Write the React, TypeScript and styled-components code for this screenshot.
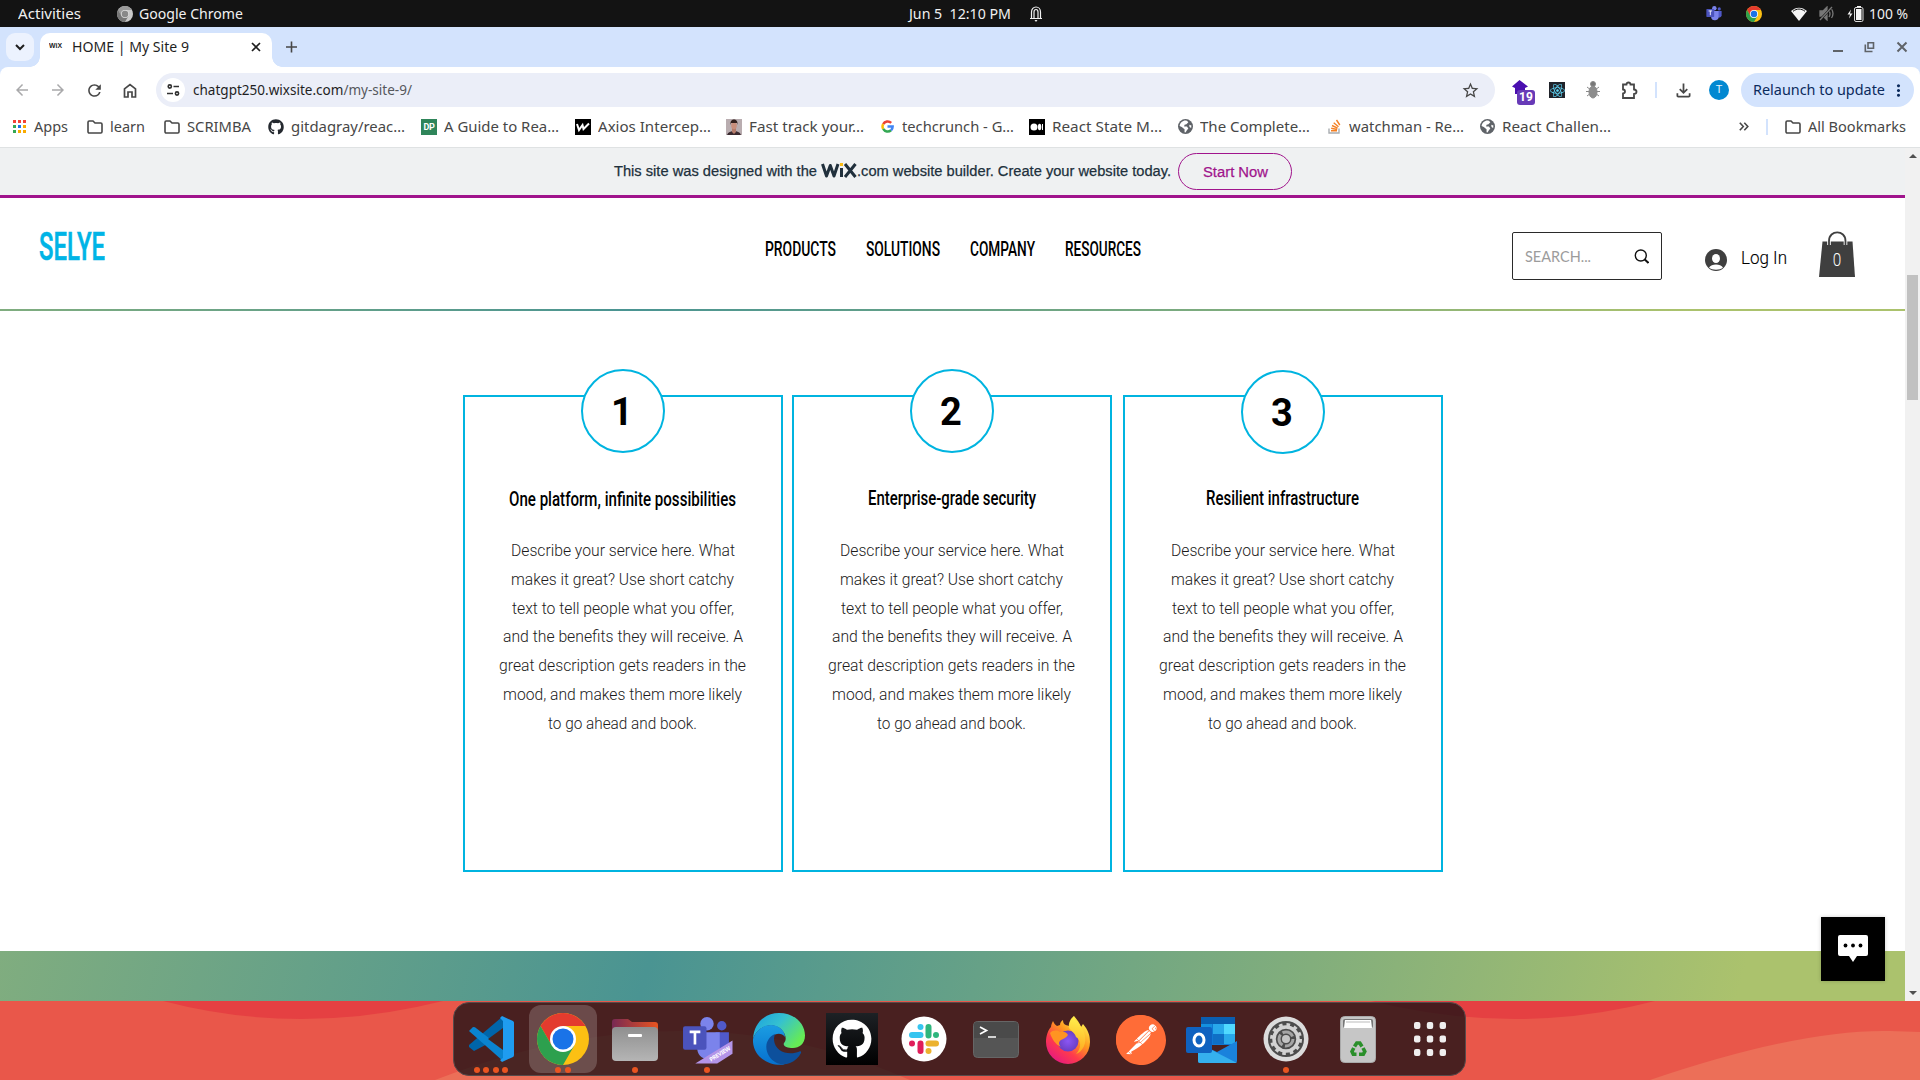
import React, { useLayoutEffect, useRef, useState } from "react";
import styled, { createGlobalStyle, css } from "styled-components";
import {
  MdArrowBack,
  MdArrowForward,
  MdRefresh,
  MdStarBorder,
  MdMoreVert,
  MdOutlineFileDownload,
} from "react-icons/md";
import { FaGithub, FaReact } from "react-icons/fa";
import { SiPostman } from "react-icons/si";

const UI = `"Noto Sans", "Open Sans", sans-serif`;
const DIN = `Roboto, "Liberation Sans", sans-serif`;

const GlobalStyle = createGlobalStyle`
  * { box-sizing: border-box; }
  html, body { margin: 0; padding: 0; overflow: hidden; }
  body { width: 1920px; height: 1080px; font-family: ${UI}; }
  svg { display: block; flex: none; }
`;

/* ---------- text condensed or widened to a given width ---------- */

const FitBox = styled.span<{ $w: number }>`
  display: block;
  flex: none;
  width: ${(p) => p.$w}px;
  white-space: pre;
`;
const FitInner = styled.span`
  display: inline-block;
  transform-origin: 0 50%;
`;

function Fit({ w, children }: { w: number; children: React.ReactNode }) {
  const ref = useRef<HTMLSpanElement>(null);
  const [scale, setScale] = useState(1);
  useLayoutEffect(() => {
    const el = ref.current;
    if (el && el.offsetWidth) setScale(w / parseFloat(getComputedStyle(el).width));
  }, [w]);
  return (
    <FitBox $w={w}>
      <FitInner ref={ref} style={{ transform: `scaleX(${scale})` }}>
        {children}
      </FitInner>
    </FitBox>
  );
}

/* ---------- layout ---------- */

const Screen = styled.div`
  width: 1920px;
  height: 1080px;
  display: flex;
  flex-direction: column;
  overflow: hidden;
  background: #fff;
`;

const Spacer = styled.div<{ $w?: number }>`
  ${(p) => (p.$w ? css`flex: none; width: ${p.$w}px;` : css`flex: 1;`)}
`;

const TopBar = styled.div`
  display: flex;
  align-items: center;
  flex: none;
  height: 27px;
  background: #131313;
  color: #f0f0f0;
  font-size: 14.5px;
  line-height: 24px;
  & > span {
    padding-bottom: 2px;
  }
`;

const TabStrip = styled.div`
  display: flex;
  align-items: flex-end;
  flex: none;
  height: 40px;
  background: #d3e3fd;
`;

const TabSearch = styled.div`
  display: grid;
  place-items: center;
  width: 28px;
  height: 28px;
  margin: 0 6px 6px;
  border-radius: 9px;
  background: #ecf2fe;
`;

const Tab = styled.div`
  position: relative;
  display: flex;
  align-items: center;
  width: 232px;
  height: 34px;
  padding: 0 10px 6px 9px;
  border-radius: 10px 10px 0 0;
  background: #fff;
  color: #1f1f1f;
  font-size: 14.5px;
  line-height: 24px;
  & > span {
    padding-bottom: 2px;
  }
  &::before,
  &::after {
    content: "";
    position: absolute;
    bottom: 0;
    width: 10px;
    height: 10px;
  }
  &::before {
    left: -10px;
    background: radial-gradient(circle at 0 0, transparent 9.5px, #fff 10px);
  }
  &::after {
    right: -10px;
    background: radial-gradient(circle at 100% 0, transparent 9.5px, #fff 10px);
  }
`;

const Favicon = styled.span`
  font: 700 7px/10px "Liberation Sans", sans-serif;
  color: #222;
`;

const WindowButtons = styled.div`
  display: flex;
  align-items: center;
  height: 40px;
  padding-right: 12px;
  gap: 20px;
`;

const ToolbarWrap = styled.div`
  flex: none;
  background: #d3e3fd;
`;
const Toolbar = styled.div`
  display: flex;
  align-items: center;
  height: 46px;
  padding: 0 6px 0 12px;
  border-radius: 8px 8px 0 0;
  background: #fff;
  color: #474747;
`;

const NavButton = styled.div<{ $off?: boolean }>`
  display: grid;
  place-items: center;
  width: 20px;
  margin-right: 16px;
  color: ${(p) => (p.$off ? "#a9a9ab" : "#474747")};
`;

const Omnibox = styled.div`
  display: flex;
  align-items: center;
  width: 1339px;
  height: 34px;
  padding: 0 15px 0 5px;
  border-radius: 17px;
  background: #ebeef8;
  color: #1f1f1f;
  font-size: 14.5px;
  line-height: 24px;
  & > span {
    padding-bottom: 2px;
  }
`;
const SiteInfo = styled.div`
  display: grid;
  place-items: center;
  width: 24px;
  height: 24px;
  margin-right: 8px;
  border-radius: 50%;
  background: #fff;
`;
const Path = styled.span`
  color: #55575c;
`;

const Extensions = styled.div`
  display: flex;
  align-items: center;
  height: 34px;
  margin-left: 17px;
`;
const PurpleExt = styled.div`
  position: relative;
  width: 22px;
  height: 28px;
  margin-right: 15px;
  padding-top: 4px;
`;
const ExtBadge = styled.span`
  position: absolute;
  left: 5px;
  top: 14px;
  width: 18px;
  height: 15px;
  border-radius: 3px;
  background: #673ab7;
  color: #fff;
  text-align: center;
  font: 700 12px/15px Roboto, sans-serif;
`;
const ReactExt = styled.div`
  display: grid;
  place-items: center;
  width: 16px;
  height: 16px;
  margin-right: 20px;
  background: #20232a;
  color: #61dafb;
`;
const Divider = styled.div<{ $h: number }>`
  width: 2px;
  height: ${(p) => p.$h}px;
  background: #d3e3fd;
`;
const Avatar = styled.div`
  display: grid;
  place-items: center;
  width: 20px;
  height: 20px;
  border-radius: 50%;
  background: #0288d1;
  color: #e8f4fb;
  font: 11px/20px Roboto, sans-serif;
`;
const Relaunch = styled.div`
  display: flex;
  align-items: center;
  width: 173px;
  height: 34px;
  margin-left: 12px;
  padding-left: 12px;
  border-radius: 17px;
  background: #d3e3fd;
  color: #0b2a5c;
  font-size: 14.5px;
  line-height: 24px;
  & > span {
    padding-bottom: 2px;
  }
`;

const BookmarksBar = styled.div`
  display: flex;
  align-items: center;
  flex: none;
  height: 35px;
  padding: 0 14px 7px 11px;
  border-bottom: 1px solid #dfe2e3;
  background: #fff;
  color: #474747;
  font-size: 14.5px;
  line-height: 24px;
`;
const Bookmark = styled.div<{ $w: number }>`
  display: flex;
  align-items: center;
  gap: 7px;
  width: ${(p) => p.$w}px;
`;
const BookmarkLabel = styled.div`
  padding-bottom: 2px;
`;
const IconSlot = styled.span<{ $bg?: string }>`
  display: grid;
  place-items: center;
  flex: none;
  width: 16px;
  height: 16px;
  background: ${(p) => p.$bg || "transparent"};
  overflow: hidden;
`;
const DpMark = styled.span`
  color: #fff;
  font: 700 9px/16px Roboto, sans-serif;
  letter-spacing: -0.3px;
`;

/* ---------- web page ---------- */

const Viewport = styled.div`
  display: flex;
  flex: none;
  height: 853px;
`;
const Page = styled.div`
  position: relative;
  display: flex;
  flex-direction: column;
  width: 1905px;
`;
const Scrollbar = styled.div`
  display: flex;
  flex-direction: column;
  align-items: center;
  width: 15px;
  padding: 6px 0 6px;
  background: #f1f1f1;
`;
const Thumb = styled.div`
  width: 11px;
  height: 125px;
  margin-top: 117px;
  background: #c1c1c1;
`;

const Banner = styled.div`
  display: flex;
  align-items: center;
  flex: none;
  height: 50px;
  padding-left: 614px;
  border-bottom: 3px solid #a0148c;
  background: #eff1f2;
  color: #20303c;
  font: 15.5px/18px "Liberation Sans", Arial, sans-serif;
  -webkit-text-stroke: 0.25px #20303c;
  & > span {
    padding-bottom: 2px;
  }
`;
const StartNow = styled.div`
  display: flex;
  justify-content: center;
  width: 114px;
  height: 37px;
  margin-left: 7px;
  border: 1px solid #a0148c;
  border-radius: 18.5px;
  color: #a0148c;
  font-size: 15.5px;
  line-height: 35px;
  -webkit-text-stroke: 0.25px #a0148c;
`;

const Header = styled.div`
  display: flex;
  flex: none;
  height: 111px;
  padding-left: 39px;
`;
const Logo = styled.div`
  width: 726px;
  padding-top: 26px;
  color: #00b4e6;
  font: 500 39px/46px ${DIN};
  -webkit-text-stroke: 0.6px #00b4e6;
`;
const NavLinks = styled.div`
  display: flex;
  gap: 30px;
  width: 747px;
  padding-top: 38px;
  color: #000;
  font: 500 21px/26px ${DIN};
`;
const SearchBox = styled.div`
  display: flex;
  align-items: center;
  justify-content: space-between;
  width: 150px;
  height: 48px;
  margin-top: 34px;
  padding: 0 12px;
  border: 1px solid #2a2a2a;
  border-radius: 2px;
  color: #9c9c9c;
  font: 400 15.5px/23px Lato, ${DIN};
`;
const Login = styled.div`
  display: flex;
  align-items: center;
  gap: 14px;
  height: 27px;
  margin: 46px 0 0 43px;
  color: #000;
  font: 300 18px/27px ${DIN};
  -webkit-text-stroke: 0.15px #000;
`;
const LoginIcon = styled.div`
  padding-top: 4px;
`;
const Cart = styled.div`
  margin: 33px 0 0 32px;
`;

const GRADIENT = "#80ad7f 0, #4a9492 630px, #82ae7c 1270px, #abc26d 1690px";
const HeaderLine = styled.div`
  flex: none;
  height: 2px;
  background: linear-gradient(90deg, ${GRADIENT});
`;
const Services = styled.div`
  display: flex;
  flex: none;
  height: 640px;
  padding: 84px 0 0 463px;
`;
const Card = styled.div<{ $gap: number }>`
  display: flex;
  flex-direction: column;
  align-items: center;
  width: 320px;
  height: 477px;
  margin-right: ${(p) => p.$gap}px;
  border: 2px solid #00b4e0;
`;
const Circle = styled.div<{ $dy: number }>`
  display: flex;
  justify-content: center;
  flex: none;
  width: 84px;
  height: 84px;
  margin-top: ${(p) => -28 + p.$dy}px;
  margin-bottom: ${(p) => -p.$dy}px;
  padding-right: 2px;
  border: 2px solid #00b4e0;
  border-radius: 50%;
  background: #fff;
  color: #000;
  font: 700 38px/82px ${DIN};
`;
const CardTitle = styled.div<{ $dy: number }>`
  margin: ${(p) => 32 + p.$dy}px 1px 0 0;
  padding-bottom: ${(p) => 26 - p.$dy}px;
  color: #000;
  font: 500 21px/26px ${DIN};
`;
const CardLine = styled.div`
  display: flex;
  justify-content: center;
  height: 28.8px;
  margin-right: 1px;
  color: #1c1b1b;
  font: 300 15.8px/28.8px ${DIN};
`;
const Band = styled.div`
  flex: none;
  height: 50px;
  background: linear-gradient(105deg, ${GRADIENT});
`;
const ChatButton = styled.div`
  position: absolute;
  left: 1821px;
  top: 769px;
  display: grid;
  place-items: center;
  width: 64px;
  height: 64px;
  background: #000;
  box-shadow: 0 0 4px rgba(0, 0, 0, 0.2);
`;

/* ---------- desktop ---------- */

const Desktop = styled.div`
  position: relative;
  flex: 1;
  padding: 1px 0 0 453px;
  background: #e9574a;
`;
const Wallpaper = styled.svg`
  position: absolute;
  inset: 0;
`;
const Dock = styled.div`
  position: relative;
  display: flex;
  align-items: center;
  width: 1013px;
  height: 74px;
  padding-left: 1px;
  border: 1px solid #574b4b;
  border-radius: 16px;
  background: rgba(28, 17, 20, 0.78);
`;
const DockItem = styled.div<{ $active?: boolean }>`
  position: relative;
  display: grid;
  place-items: center;
  flex: none;
  width: 68px;
  height: 68px;
  margin: 0 2.05px;
  border-radius: 12px;
  background: ${(p) => (p.$active ? "rgba(255,255,255,.19)" : "transparent")};
`;
const Dots = styled.div`
  position: absolute;
  left: 0;
  right: 0;
  bottom: 0;
  display: flex;
  justify-content: center;
  gap: 3.3px;
`;
const Dot = styled.i`
  width: 6px;
  height: 6px;
  border-radius: 50%;
  background: #e95420;
`;
const DockLine = styled.div`
  width: 1px;
  height: 54px;
  margin: 0 1px;
  background: #75605d;
`;

/* ---------- icons ---------- */

const ChromeLogo = ({ s, gray }: { s: number; gray?: boolean }) => {
  const c = gray ? ["#9a9a9a", "#c9c9c9", "#777", "#888", "#ddd"] : ["#e33b2e", "#fcc013", "#2da04e", "#1a73e8", "#fff"];
  return (
    <svg width={s} height={s} viewBox="0 0 52 52">
      <circle cx="26" cy="26" r="26" fill={c[1]} />
      <path d="M26 26 14.8 32.5 3.5 13A26 26 0 0 1 48.5 13H26z" fill={c[0]} />
      <path d="M3.5 13A26 26 0 0 0 26 52L37.3 32.5 26 26 14.8 32.5z" fill={c[2]} />
      <circle cx="26" cy="26" r="13" fill={c[4]} />
      <circle cx="26" cy="26" r="10.5" fill={c[3]} />
    </svg>
  );
};

const Folder = () => (
  <svg width="16" height="14" viewBox="0 0 16 14" fill="none" stroke="#474747" strokeWidth="1.6">
    <path d="M1 2.2c0-.8.5-1.2 1.2-1.2H6l2 2h5.8c.7 0 1.2.5 1.2 1.2v7.6c0 .7-.5 1.2-1.2 1.2H2.2C1.5 13 1 12.500 1 11.800z" />
  </svg>
);
const Globe = () => (
  <svg width="15" height="15" viewBox="0 0 16 16">
    <circle cx="8" cy="8" r="8" fill="#5f6368" />
    <path d="M9.500 1.800 11 3.500 9 5.500 7 6 6.500 8h3l1.500 2-1.500 2-1.500 2.300L7 14v-3L4 8.500 1.700 7.500C2 4 5 1.500 8 1.500zM12 6l2.300 1-.3 2.500-1.700-1z" fill="#fff" />
  </svg>
);
const AppsGrid = () => (
  <svg width="13" height="13" viewBox="0 0 13 13">
    {["#f44336", "#f44336", "#f44336", "#34a853", "#1a73e8", "#f9ab00", "#34a853", "#f9ab00", "#f9ab00"].map((f, i) => (
      <rect key={i} x={(i % 3) * 5} y={Math.floor(i / 3) * 5} width="3" height="3" fill={f} />
    ))}
  </svg>
);
const GoogleG = () => (
  <svg width="13" height="13" viewBox="0 0 24 24" fill="none" strokeWidth="4.600">
    <path d="M4 7.500A9.600 9.600 0 0 1 18.800 5.200" stroke="#ea4335" />
    <path d="M4 7.500a9.600 9.600 0 0 0 0 9" stroke="#fbbc05" />
    <path d="M4 16.500a9.600 9.600 0 0 0 14.500 2.500" stroke="#34a853" />
    <path d="M18.500 19a9.600 9.600 0 0 0 3-7H12" stroke="#4285f4" />
  </svg>
);
const AxiosMark = () => (
  <svg width="16" height="16" viewBox="0 0 16 16">
    <path d="M2 5l2 6 3.500-5 1 4L14 4.500" fill="none" stroke="#fff" strokeWidth="2" />
  </svg>
);
const Portrait = () => (
  <svg width="16" height="16" viewBox="0 0 16 16">
    <rect width="16" height="16" fill="#b9adb0" />
    <path d="M1 16c1-3 4-4 7-4s6 1 7 4z" fill="#3a2a30" />
    <path d="M6 9h4v4l-2 2-2-2z" fill="#b67c6a" />
    <ellipse cx="8" cy="6.500" rx="2.800" ry="3.800" fill="#c98f7c" />
    <path d="M4.500 6C4 2 6 .500 8 .500s4 1.500 3.500 5.500L11 4H5z" fill="#33211e" />
  </svg>
);
const MediumMark = () => (
  <svg width="16" height="16" viewBox="0 0 16 16" fill="#fff">
    <circle cx="5" cy="8" r="3.500" />
    <ellipse cx="10.600" cy="8" rx="1.700" ry="3.300" />
    <rect x="13" y="5" width="1" height="6" />
  </svg>
);
const StackMark = () => (
  <svg width="13" height="15" viewBox="0 0 13 15" fill="none">
    <path d="M1 9.500V14h10V9.500" stroke="#a8acb0" strokeWidth="1.400" />
    <path d="M3 11.800h6M3.200 9.300l6 1.200M4 6.500l5.600 2.700M5.700 3.700l4.800 4M8.500 1l3.300 5" stroke="#f48024" strokeWidth="1.400" />
  </svg>
);
const Teams = ({ s, preview }: { s: number; preview?: boolean }) => (
  <svg width={s} height={s} viewBox="0 0 50 50">
    <circle cx="39" cy="11.500" r="4.600" fill="#5059c9" />
    <path d="M33 18h13v13a8 8 0 0 1-13 4z" fill="#5059c9" />
    <circle cx="24.500" cy="9.500" r="6.600" fill="#7b83eb" />
    <path d="M15 18h22v14a11 11 0 0 1-22 3z" fill="#7b83eb" />
    <rect x="1" y="12" width="23" height="23" rx="2" fill="#4b53bc" />
    <path d="M7.500 17.500h10.500M12.700 17v13" stroke="#fff" strokeWidth="2.600" />
    {preview && (
      <>
        <path d="M13 48.500 49.500 26v13L34.500 48.500z" fill="#b394e8" />
        <text x="28.500" y="46.800" fontSize="5.600" fontWeight="700" fontFamily="Noto Sans, sans-serif" fill="#fff" textLength="23" transform="rotate(-32 28.500 46.800)">
          PREVIEW
        </text>
      </>
    )}
  </svg>
);

const VsCode = () => (
  <svg width="46" height="46" viewBox="0 0 46 46">
    <path d="M34 1 46 6v8L6 35 1 31v-2z" fill="#0065a9" />
    <path d="M1 15l4-4 2 .3L35 33v12z" fill="#0a84d0" />
    <path d="M34 0 45 5q1 1 1 2v32q0 1.500-1 2l-11 5-2-2 3-2V5l-3-3z" fill="#1f9cf0" />
    <path d="M35 12v22L20 23z" fill="#46231f" />
  </svg>
);
const Files = () => (
  <svg width="46" height="43" viewBox="0 0 46 43">
    <defs>
      <linearGradient id="ft"><stop stopColor="#772953" /><stop offset="1" stopColor="#e95420" /></linearGradient>
      <linearGradient id="fb" x2="0" y2="1"><stop stopColor="#8f8f8f" /><stop offset="1" stopColor="#b5b5b5" /></linearGradient>
    </defs>
    <path d="M0 4q0-3 3-3h13l4 3h23q3 0 3 3v14H0z" fill="url(#ft)" />
    <rect x="0" y="9" width="46" height="34" rx="4" fill="url(#fb)" />
    <rect x="16" y="16" width="14" height="3" rx="1" fill="#fff" />
  </svg>
);
const Edge = () => (
  <svg width="52" height="52" viewBox="0 0 52 52">
    <defs>
      <linearGradient id="ew" x1="0" x2="1" y2=".6"><stop stopColor="#1a9fe0" /><stop offset=".5" stopColor="#35c1d0" /><stop offset="1" stopColor="#66eb55" /></linearGradient>
      <linearGradient id="eb" x2="0" y2="1"><stop stopColor="#1b9de2" /><stop offset="1" stopColor="#0670ce" /></linearGradient>
    </defs>
    <path d="M0 26C1 10 12 0 26 0c15 0 26 10 26 22.500C52 31 46 35 40 35c-6 0-10.500-2-9-5 3-3 2-9-3-14C18 8 4 14 0 26z" fill="url(#ew)" />
    <path d="M0 26C3 17 10 12 18 12c8 0 14 6 14 12-6-8-18 0-16 10s8 16 16 17.500C14 54-1 42 0 26z" fill="url(#eb)" />
    <path d="M22 21c-9 4-11 14-6 22s14 10 21 7c5-2 9-6 11-10 .5-1.500-.5-2-1.500-1.500C36 43 22 39 21 27c0-3 .5-4 1-6z" fill="#0d509c" />
  </svg>
);
const SlackLogo = () => (
  <svg width="46" height="46" viewBox="0 0 46 46">
    <circle cx="23" cy="23" r="22.500" fill="#fff" />
    <g strokeWidth="6" strokeLinecap="round">
      <path d="M11 19h8.500" stroke="#36c5f0" /><path d="M19.500 11v0" stroke="#36c5f0" />
      <path d="M27.500 11v8.500" stroke="#2eb67d" /><path d="M35 19v0" stroke="#2eb67d" />
      <path d="M27.500 27.500H35" stroke="#ecb22e" /><path d="M27.500 35v0" stroke="#ecb22e" />
      <path d="M19.500 27.500V35" stroke="#e01e5a" /><path d="M11 27.500v0" stroke="#e01e5a" />
    </g>
  </svg>
);
const Terminal = () => (
  <svg width="46" height="37" viewBox="0 0 46 37">
    <rect x=".5" y=".5" width="45" height="36" rx="4" fill="#555" stroke="#666" />
    <path d="M1 17V4q0-3 3-3h38q3 0 3 3v13z" fill="#4a4a4a" />
    <path d="M7 6l6.500 3.500L7 13M15 16h8" fill="none" stroke="#fff" strokeWidth="1.700" />
  </svg>
);
const Firefox = () => (
  <svg width="46" height="49" viewBox="0 0 46 49">
    <defs>
      <linearGradient id="ff" x1=".85" y1=".1" x2=".2" y2="1"><stop stopColor="#fff44f" /><stop offset=".35" stopColor="#ff9a1f" /><stop offset=".65" stopColor="#ff3b4b" /><stop offset="1" stopColor="#e31587" /></linearGradient>
      <linearGradient id="fy" x1=".6" y1="0" x2=".5" y2="1"><stop stopColor="#fff44f" /><stop offset="1" stopColor="#ffa41c" /></linearGradient>
      <radialGradient id="fp"><stop stopColor="#8b56f5" /><stop offset="1" stopColor="#6b3fc4" /></radialGradient>
    </defs>
    <path d="M6 12c0-2 1-4 2-6 1 2 2 4 4 5l3-1c0-2 1-4 3-5 0 4 2 5 6 6L29 1c3 4 6 7 7 11l2-3c5 6 7 11 7 18A22 22 0 0 1 1 27C1 21 3 15 6 12z" fill="url(#ff)" />
    <circle cx="23" cy="26" r="10.500" fill="url(#fp)" />
    <path d="M5 18c3-3 7-3 10-1 3-1 7 0 8 3-2 3-5 4-7 5-3 2-2 5 0 7-6-3-9-8-11-14z" fill="#ff9422" />
    <path d="M24 13c-1-5 2-10 5-12 0 5 8 9 10 16 4 12-2 20-8 22 6-6 5-14 0-17-1-4-4-5-7-9z" fill="url(#fy)" />
  </svg>
);
const Outlook = () => (
  <svg width="51" height="47" viewBox="0 0 51 47">
    <rect x="15" y="1" width="34" height="28" rx="2" fill="#0f78d4" />
    <path d="M15 8h11v10H15z" fill="#1490df" /><path d="M27 8h11v10H27z" fill="#28a8ea" /><path d="M38 8h11v10H38z" fill="#50d9ff" />
    <path d="M15 1h34v7H15z" fill="#0a5eb0" /><path d="M27 18h11v10H27z" fill="#0f6fc6" /><path d="M38 18h11v10H38z" fill="#28a8ea" />
    <path d="M51 25v20q0 2-2 2H14q-2 0-2-2V27l19 9z" fill="#1a82dc" />
    <path d="M12 27l39 20H14q-2 0-2-2z" fill="#35b0ee" />
    <rect x="0" y="11" width="26" height="26" rx="2" fill="#0f62c0" />
    <ellipse cx="13" cy="24" rx="5" ry="6" fill="none" stroke="#fff" strokeWidth="3" />
  </svg>
);
const Settings = () => (
  <svg width="46" height="46" viewBox="0 0 46 46">
    <circle cx="23" cy="23" r="22.500" fill="#dcdcdc" />
    <circle cx="23" cy="23" r="18" fill="#4c4c4c" />
    <circle cx="23" cy="23" r="14.500" fill="none" stroke="#d2d2d2" strokeWidth="3" strokeDasharray="3.600 4" />
    <circle cx="23" cy="23" r="12" fill="none" stroke="#d2d2d2" strokeWidth="3.500" />
    <circle cx="23" cy="23" r="7" fill="none" stroke="#a5a5a5" strokeWidth="3" strokeDasharray="12 2.600" />
    <circle cx="23" cy="23" r="4" fill="#c4c4c4" />
  </svg>
);
const Trash = () => (
  <svg width="36" height="47" viewBox="0 0 36 47">
    <rect x=".5" y=".5" width="35" height="46" rx="4" fill="#c6c6c6" stroke="#aaa" />
    <rect x="3" y="3" width="30" height="9" rx="2" fill="#777" />
    <path d="M5 4h26l1 8H4z" fill="#fff" /><path d="M6 6h24" stroke="#bbb" />
    <g fill="none" stroke="#2a8f2a" strokeWidth="3.600">
      <path d="M14.500 30.500 16.800 27h3l2.200 3.500" />
      <path d="M23 32l1.800 3.500-1.500 2.800H19" />
      <path d="M16.500 38.300h-3.200L12 35.500l1.800-3.500" />
    </g>
  </svg>
);
const GridDots = () => (
  <svg width="32" height="34" viewBox="0 0 32 34" fill="#f0eeee">
    {[0, 1, 2, 3, 4, 5, 6, 7, 8].map((i) => (
      <rect key={i} x={(i % 3) * 12.800} y={Math.floor(i / 3) * 13.500} width="6.400" height="7" rx="2" />
    ))}
  </svg>
);
const GithubTile = styled.div`
  display: grid;
  place-items: center;
  width: 52px;
  height: 52px;
  background: linear-gradient(#1d2125, #000);
  color: #fff;
`;
const PostmanTile = styled.div`
  display: grid;
  place-items: center;
  width: 48px;
  height: 48px;
  border-radius: 50%;
  background: radial-gradient(circle, #fff 60%, #ff6c37 62%);
  color: #ff6c37;
`;
const WixLogo = () => (
  <svg width="36" height="17" viewBox="0 0 36 17" fill="none" stroke="#20303c" strokeWidth="3" strokeLinejoin="round">
    <path d="M1.500 1 5.500 13 9.300 2.500 13 13 17 1" />
    <path d="M20.500 5v9" />
    <path d="M24 1l10.500 13M34.500 1 24 14" />
    <path d="M20.500 0v3" stroke="#fbbd15" />
  </svg>
);

/* ---------- data ---------- */

const bookmarks: { label: string; slot: number; w: number; icon: React.ReactNode; bg?: string }[] = [
  { label: "Apps", slot: 76, w: 34, icon: <AppsGrid /> },
  { label: "learn", slot: 77, w: 35, icon: <Folder /> },
  { label: "SCRIMBA", slot: 104, w: 64, icon: <Folder /> },
  { label: "gitdagray/reac…", slot: 153, w: 114, icon: <FaGithub size={16} color="#24292f" /> },
  { label: "A Guide to Rea…", slot: 154, w: 115, icon: <DpMark>DP</DpMark>, bg: "#2f855a" },
  { label: "Axios Intercep…", slot: 151, w: 113, icon: <AxiosMark />, bg: "#000" },
  { label: "Fast track your…", slot: 153, w: 115, icon: <Portrait /> },
  { label: "techcrunch - G…", slot: 150, w: 112, icon: <GoogleG /> },
  { label: "React State M…", slot: 148, w: 110, icon: <MediumMark />, bg: "#000" },
  { label: "The Complete…", slot: 149, w: 110, icon: <Globe /> },
  { label: "watchman - Re…", slot: 153, w: 115, icon: <StackMark /> },
  { label: "React Challen…", slot: 258, w: 109, icon: <Globe /> },
];

const lines: [string, number][] = [
  ["Describe your service here. What", 224],
  ["makes it great? Use short catchy", 223],
  ["text to tell people what you offer,", 222],
  ["and the benefits they will receive. A", 240],
  ["great description gets readers in the", 247],
  ["mood, and makes them more likely", 239],
  ["to go ahead and book.", 149],
];

const cards = [
  { n: "1", title: "One platform, infinite possibilities", w: 227, gap: 9, dy: 0, ty: 1 },
  { n: "2", title: "Enterprise-grade security", w: 168, gap: 11, dy: 0, ty: 0 },
  { n: "3", title: "Resilient infrastructure", w: 153, gap: 0, dy: 1, ty: 0 },
];

const dock: { icon: React.ReactNode; dots: number; active?: boolean }[] = [
  { icon: <VsCode />, dots: 4 },
  { icon: <ChromeLogo s={52} />, dots: 2, active: true },
  { icon: <Files />, dots: 1 },
  { icon: <Teams s={51} preview />, dots: 1 },
  { icon: <Edge />, dots: 0 },
  { icon: <GithubTile><FaGithub size={40} /></GithubTile>, dots: 0 },
  { icon: <SlackLogo />, dots: 0 },
  { icon: <Terminal />, dots: 0 },
  { icon: <Firefox />, dots: 0 },
  { icon: <PostmanTile><SiPostman size={50} /></PostmanTile>, dots: 0 },
  { icon: <Outlook />, dots: 0 },
];
const dockRight = [
  { icon: <Settings />, dots: 1 },
  { icon: <Trash />, dots: 0 },
  { icon: <GridDots />, dots: 0 },
];

const DockEntry = ({ icon, dots, active }: { icon: React.ReactNode; dots: number; active?: boolean }) => (
  <DockItem $active={active}>
    {icon}
    <Dots>{Array.from({ length: dots }, (_, i) => <Dot key={i} />)}</Dots>
  </DockItem>
);

export default function App() {
  return (
    <Screen>
      <GlobalStyle />
      <TopBar>
        <Spacer $w={18} />
        <Fit w={63}>Activities</Fit>
        <Spacer $w={36} />
        <ChromeLogo s={16} gray />
        <Spacer $w={6} />
        <Fit w={104}>Google Chrome</Fit>
        <Spacer $w={666} />
        <Fit w={102}>{"Jun 5  12:10 PM"}</Fit>
        <Spacer $w={18} />
        <svg width="14" height="16" viewBox="0 0 14 16" fill="none" stroke="#f0f0f0" strokeWidth="1.2">
          <path d="M1 12.500h12M2.500 12.500V6C2.500 3 4.500 1 7 1s4.500 2 4.500 5v6.500M5 12V6c0-1.500.8-2.500 2-2.500S9 4.500 9 6v6" />
          <path d="M5.500 14h3l-1.500 2z" fill="#f0f0f0" stroke="none" />
        </svg>
        <Spacer />
        <Teams s={17} />
        <Spacer $w={23} />
        <ChromeLogo s={16} />
        <Spacer $w={29} />
        <svg width="16" height="14" viewBox="0 0 16 14">
          <path d="M0 4c5-4.500 11-4.500 16 0L8 14z" fill="#f5f5f5" />
          <path d="M2 4.300c4-3 8-3 12 0" fill="none" stroke="#131313" />
        </svg>
        <Spacer $w={12} />
        <svg width="16" height="15" viewBox="0 0 16 15" fill="none" stroke="#777" strokeWidth="1.300">
          <path d="M1 5h3l4-4v13l-4-4H1z" fill="#777" />
          <path d="M10 5q2 2.500 0 6M12.500 3q3 4.500 0 9" />
          <path d="M1 14 13 1" stroke="#131313" strokeWidth="2.500" />
          <path d="M1 14 13 1" />
        </svg>
        <Spacer $w={12} />
        <svg width="17" height="16" viewBox="0 0 17 16">
          <path d="M4 3.500.5 8.500H3l-1 4L5.500 7.500H3z" fill="#f5f5f5" />
          <rect x="7.500" y="1.500" width="8.500" height="14" rx="1.500" fill="none" stroke="#ddd" />
          <rect x="9" y="3" width="5.500" height="11" fill="#f5f5f5" />
          <path d="M10 .5h4" stroke="#f5f5f5" />
        </svg>
        <Spacer $w={5} />
        <Fit w={39}>100 %</Fit>
        <Spacer $w={12} />
      </TopBar>

      <TabStrip>
        <TabSearch>
          <svg width="10" height="7" viewBox="0 0 10 7" fill="none" stroke="#1f1f1f" strokeWidth="2">
            <path d="M1 1l4 4 4-4" />
          </svg>
        </TabSearch>
        <Tab>
          <Favicon><Fit w={13}>WiX</Fit></Favicon>
          <Spacer $w={10} />
          <Fit w={117}>HOME | My Site 9</Fit>
          <Spacer />
          <svg width="12" height="10" viewBox="0 0 12 10" stroke="#1f1f1f" strokeWidth="1.700">
            <path d="M2 1l8 8M10 1 2 9" />
          </svg>
        </Tab>
        <Spacer $w={14} />
        <svg width="11" height="28" viewBox="0 0 11 28" stroke="#474747" strokeWidth="1.600">
          <path d="M5.500 2.500v11M0 8h11" />
        </svg>
        <Spacer />
        <WindowButtons>
          <svg width="12" height="12" viewBox="0 0 12 12"><path d="M1 10h10" stroke="#5f6368" strokeWidth="2" /></svg>
          <svg width="12" height="12" viewBox="0 0 12 12" fill="none" stroke="#5f6368" strokeWidth="1.600">
            <path d="M4 1.800h5.500v5.400H4zM1.300 3.500v7H8.500" />
          </svg>
          <svg width="12" height="12" viewBox="0 0 12 12" stroke="#5f6368" strokeWidth="2"><path d="M1.500 1.500l9 9M10.500 1.500l-9 9" /></svg>
        </WindowButtons>
      </TabStrip>

      <ToolbarWrap>
        <Toolbar>
          <NavButton $off><MdArrowBack size={18} /></NavButton>
          <NavButton $off><MdArrowForward size={18} /></NavButton>
          <NavButton><MdRefresh size={19} /></NavButton>
          <NavButton>
            <svg width="14" height="15" viewBox="0 0 14 15" fill="none" stroke="currentColor" strokeWidth="1.700">
              <path d="M1.500 14V5.800L7 1.500l5.500 4.300V14H9V9H5v5z" />
            </svg>
          </NavButton>
          <Omnibox>
            <SiteInfo>
              <svg width="13" height="12" viewBox="0 0 13 12" fill="none" stroke="#303030" strokeWidth="1.600">
                <circle cx="2.800" cy="2.500" r="1.600" /><path d="M6.500 2.500H12M0 9.500h6" /><circle cx="10" cy="9.500" r="1.600" />
              </svg>
            </SiteInfo>
            <Fit w={219}>chatgpt250.wixsite.com<Path>/my-site-9/</Path></Fit>
            <Spacer />
            <MdStarBorder size={19} color="#474747" />
          </Omnibox>
          <Extensions>
            <PurpleExt>
              <svg width="16" height="14" viewBox="0 0 16 14"><path d="M0 6.500 7.500 0 16 6.500l-3 1.500v6H3V8z" fill="#4a0fb0" /></svg>
              <ExtBadge>19</ExtBadge>
            </PurpleExt>
            <ReactExt><FaReact size={15} /></ReactExt>
            <svg width="16" height="20" viewBox="0 0 16 20" stroke="#8a8a8a" strokeWidth="1">
              <path d="M2 7l12 9M14 7 2 16M1 11.500h14" />
              <circle cx="8" cy="4" r="2.500" fill="#777" /><ellipse cx="8" cy="12" rx="4" ry="6" fill="#8d8d8d" />
            </svg>
            <Spacer $w={20} />
            <svg width="17" height="19" viewBox="0 0 17 19" fill="none" stroke="#474747" strokeWidth="1.800">
              <path d="M2 3.500h3.500q.2-2 2-2t2 2H13V8.500q2.500.2 2.500 2.200T13 13v4H2v-4.500q2-.2 2-2T2 8.500z" />
            </svg>
            <Spacer $w={17} />
            <Divider $h={16} />
            <Spacer $w={16} />
            <MdOutlineFileDownload size={21} />
            <Spacer $w={15} />
            <Avatar>T</Avatar>
          </Extensions>
          <Relaunch>
            <Fit w={132}>Relaunch to update</Fit>
            <Spacer $w={4} />
            <MdMoreVert size={19} />
          </Relaunch>
        </Toolbar>
      </ToolbarWrap>

      <BookmarksBar>
        {bookmarks.map((b, i) => (
          <Bookmark key={i} $w={b.slot}>
            <IconSlot $bg={b.bg}>{b.icon}</IconSlot>
            <BookmarkLabel><Fit w={b.w}>{b.label}</Fit></BookmarkLabel>
          </Bookmark>
        ))}
        <Spacer />
        <svg width="10" height="9" viewBox="0 0 10 9" fill="none" stroke="#474747" strokeWidth="1.600">
          <path d="M.8.800 4.300 4.500.8 8.200M5.300.800l3.500 3.700-3.500 3.700" />
        </svg>
        <Spacer $w={17} />
        <Divider $h={16} />
        <Spacer $w={17} />
        <Folder />
        <Spacer $w={7} />
        <BookmarkLabel><Fit w={98}>All Bookmarks</Fit></BookmarkLabel>
      </BookmarksBar>

      <Viewport>
        <Page>
          <Banner>
            <Fit w={203}>This site was designed with the</Fit>
            <Spacer $w={4} />
            <WixLogo />
            <Fit w={314}>.com website builder. Create your website today.</Fit>
            <StartNow><Fit w={65}>Start Now</Fit></StartNow>
          </Banner>
          <Header>
            <Logo><Fit w={66}>SELYE</Fit></Logo>
            <NavLinks>
              <Fit w={71}>PRODUCTS</Fit>
              <Fit w={74}>SOLUTIONS</Fit>
              <Fit w={65}>COMPANY</Fit>
              <Fit w={76}>RESOURCES</Fit>
            </NavLinks>
            <SearchBox>
              <Fit w={66}>SEARCH...</Fit>
              <svg width="15" height="15" viewBox="0 0 15 15" fill="none" stroke="#111" strokeWidth="1.400">
                <circle cx="6.800" cy="6.500" r="5.500" /><path d="M10.500 10.300l4 3.700" strokeWidth="2" />
              </svg>
            </SearchBox>
            <Login>
              <LoginIcon>
                <svg width="22" height="22" viewBox="0 0 22 22">
                  <circle cx="11" cy="11" r="11" fill="#3f3f3f" />
                  <ellipse cx="11" cy="9.500" rx="4" ry="4.600" fill="#fff" />
                  <path d="M4 18.500c2.500-4 11.500-4 14 0-3 3-11 3-14 0z" fill="#fff" />
                </svg>
              </LoginIcon>
              <Fit w={46}>Log In</Fit>
            </Login>
            <Cart>
              <svg width="36" height="46" viewBox="0 0 36 46">
                <path d="M3.500 10.500h30L36 46H0z" fill="#3f3f3f" />
                <path d="M10 14v-4c0-11.500 16.500-11.500 16.500 0v4" fill="none" stroke="#fff" strokeWidth="3.600" />
                <path d="M10 14v-4c0-11.500 16.500-11.500 16.500 0v4" fill="none" stroke="#3f3f3f" strokeWidth="1.800" />
                <text x="18" y="34.500" textAnchor="middle" fill="#fff" fontSize="18" fontWeight="300" fontFamily="Roboto" textLength="8.500" lengthAdjust="spacingAndGlyphs">0</text>
              </svg>
            </Cart>
          </Header>
          <HeaderLine />
          <Services>
            {cards.map((c) => (
              <Card key={c.n} $gap={c.gap}>
                <Circle $dy={c.dy}>{c.n}</Circle>
                <CardTitle $dy={c.ty}><Fit w={c.w}>{c.title}</Fit></CardTitle>
                {lines.map(([t, w]) => (
                  <CardLine key={t}><Fit w={w}>{t}</Fit></CardLine>
                ))}
              </Card>
            ))}
          </Services>
          <Band />
          <ChatButton>
            <svg width="30" height="29" viewBox="0 0 30 29">
              <path d="M2 0h26q2 0 2 2v17q0 2-2 2h-9l-4 6-4-6H2q-2 0-2-2V2q0-2 2-2z" fill="#fff" />
              <circle cx="7.500" cy="10.500" r="1.900" /><circle cx="15" cy="10.500" r="1.900" /><circle cx="22.500" cy="10.500" r="1.900" />
            </svg>
          </ChatButton>
        </Page>
        <Scrollbar>
          <svg width="8" height="4" viewBox="0 0 8 4"><path d="M0 4l4-4 4 4z" fill="#505050" /></svg>
          <Thumb />
          <Spacer />
          <svg width="8" height="4" viewBox="0 0 8 4"><path d="M0 0l4 4 4-4z" fill="#505050" /></svg>
        </Scrollbar>
      </Viewport>

      <Desktop>
        <Wallpaper width="1920" height="79" viewBox="0 0 1920 79">
          <path d="M163 0Q300 36 443 0zM1371 0Q1517 36 1655 0z" fill="#e54042" />
          <path d="M1650 79Q1800 28 1890 30L1920 31V79zM435 79Q560 30 680 30T910 79z" fill="#ec6f58" />
        </Wallpaper>
        <Dock>
          {dock.map((d, i) => <DockEntry key={i} {...d} />)}
          <DockLine />
          {dockRight.map((d, i) => <DockEntry key={i} {...d} />)}
        </Dock>
      </Desktop>
    </Screen>
  );
}
